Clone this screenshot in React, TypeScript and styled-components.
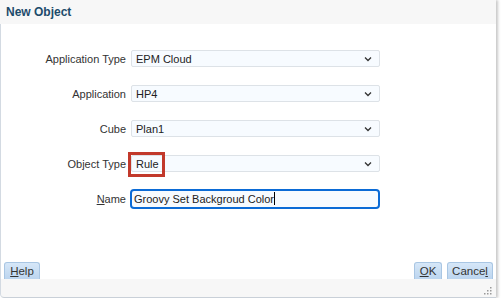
import styled, { createGlobalStyle } from 'styled-components';

const GlobalStyle = createGlobalStyle`
  html, body {
    margin: 0;
    padding: 0;
    background: #ffffff;
  }
  body {
    font-family: "Liberation Sans", Arial, sans-serif;
    font-size: 11px;
    color: #333333;
  }
`;

const Dialog = styled.div`
  width: 496px;
  height: 298px;
  display: flex;
  flex-direction: column;
  box-sizing: border-box;
  box-shadow: 2px 0 3px rgba(0, 0, 0, 0.22);
  border-bottom-left-radius: 4px;
  overflow: hidden;
`;

const Header = styled.div`
  height: 24px;
  flex: none;
  display: flex;
  align-items: center;
  padding-left: 6px;
  background: #f7f7f7;
  color: #1d4b6b;
  font-weight: bold;
  font-size: 12px;
`;

const Body = styled.div`
  flex: 1;
  display: flex;
  flex-direction: column;
  background: #ffffff;
  border-left: 1px solid #d3dae2;
`;

const Form = styled.div`
  display: flex;
  flex-direction: column;
  padding-top: 17px;
  flex: 1;
`;

const Row = styled.div`
  height: 35px;
  display: grid;
  grid-template-columns: 125px 249px;
  column-gap: 5px;
  align-items: center;
`;

const Label = styled.label`
  text-align: right;
  color: #333333;
  white-space: nowrap;
`;

const Select = styled.div`
  position: relative;
  height: 17px;
  box-sizing: border-box;
  border: 1px solid #dde2e7;
  border-radius: 2px;
  background: #f7fbff;
  display: flex;
  align-items: center;
  justify-content: space-between;
  padding: 0 7px 0 4px;
  color: #222222;
`;

const Highlight = styled.div`
  position: absolute;
  left: -4px;
  top: -4px;
  width: 31px;
  height: 19px;
  border: 3px solid #c2392b;
`;

const NameInput = styled.div`
  height: 20px;
  box-sizing: border-box;
  border: 2px solid #0b6bd6;
  border-radius: 4px;
  background: #f7fbff;
  display: flex;
  align-items: center;
  padding-left: 2px;
  margin-left: -1px;
  color: #222222;
`;

const Caret = styled.span`
  display: inline-block;
  width: 1px;
  height: 13px;
  background: #000000;
`;

const ButtonBar = styled.div`
  display: flex;
  justify-content: space-between;
  align-items: flex-end;
  padding: 0 3px 0 3px;
`;

const ButtonGroup = styled.div`
  display: flex;
  gap: 5px;
`;

const Button = styled.button<{ $width: number }>`
  width: ${(p) => p.$width}px;
  height: 17px;
  padding: 0;
  box-sizing: border-box;
  border: 1px solid #a9c6e3;
  border-bottom: none;
  border-radius: 3px 3px 0 0;
  background: linear-gradient(#d6e7f8, #bcd5ef);
  color: #333333;
  font-family: "Liberation Sans", Arial, sans-serif;
  font-size: 11.5px;
  line-height: 15px;
`;

const Footer = styled.div`
  height: 16px;
  flex: none;
  background: #f7f7f7;
  border-left: 1px solid #d3dae2;
  border-bottom: 1px solid #c9d0d8;
  border-bottom-left-radius: 4px;
  display: flex;
  justify-content: flex-end;
  align-items: flex-end;
  padding: 0 4px 2px 0;
`;

const Chevron = () => (
  <svg width="8" height="6" viewBox="0 0 8 6">
    <path d="M1 1.5 L4 4.5 L7 1.5" fill="none" stroke="#333" strokeWidth="1.3" />
  </svg>
);

const Grip = () => (
  <svg width="10" height="10" viewBox="0 0 10 10">
    {[[8, 2], [8, 5], [5, 5], [8, 8], [5, 8], [2, 8]].map(([x, y]) => (
      <rect key={`${x}-${y}`} x={x} y={y} width="1.5" height="1.5" fill="#9a9a9a" />
    ))}
  </svg>
);

const selects = [
  { label: 'Application Type', value: 'EPM Cloud' },
  { label: 'Application', value: 'HP4' },
  { label: 'Cube', value: 'Plan1' },
];

const App = () => (
  <>
    <GlobalStyle />
    <Dialog>
      <Header>New Object</Header>
      <Body>
        <Form>
          {selects.map((s) => (
            <Row key={s.label}>
              <Label>{s.label}</Label>
              <Select>
                <span>{s.value}</span>
                <Chevron />
              </Select>
            </Row>
          ))}
          <Row>
            <Label>Object Type</Label>
            <Select>
              <span>Rule</span>
              <Chevron />
              <Highlight />
            </Select>
          </Row>
          <Row>
            <Label><u>N</u>ame</Label>
            <NameInput>
              Groovy Set Backgroud Color<Caret />
            </NameInput>
          </Row>
        </Form>
        <ButtonBar>
          <Button $width={36}><u>H</u>elp</Button>
          <ButtonGroup>
            <Button $width={28}><u>O</u>K</Button>
            <Button $width={46}>Cance<u>l</u></Button>
          </ButtonGroup>
        </ButtonBar>
      </Body>
      <Footer>
        <Grip />
      </Footer>
    </Dialog>
  </>
);

export default App;
